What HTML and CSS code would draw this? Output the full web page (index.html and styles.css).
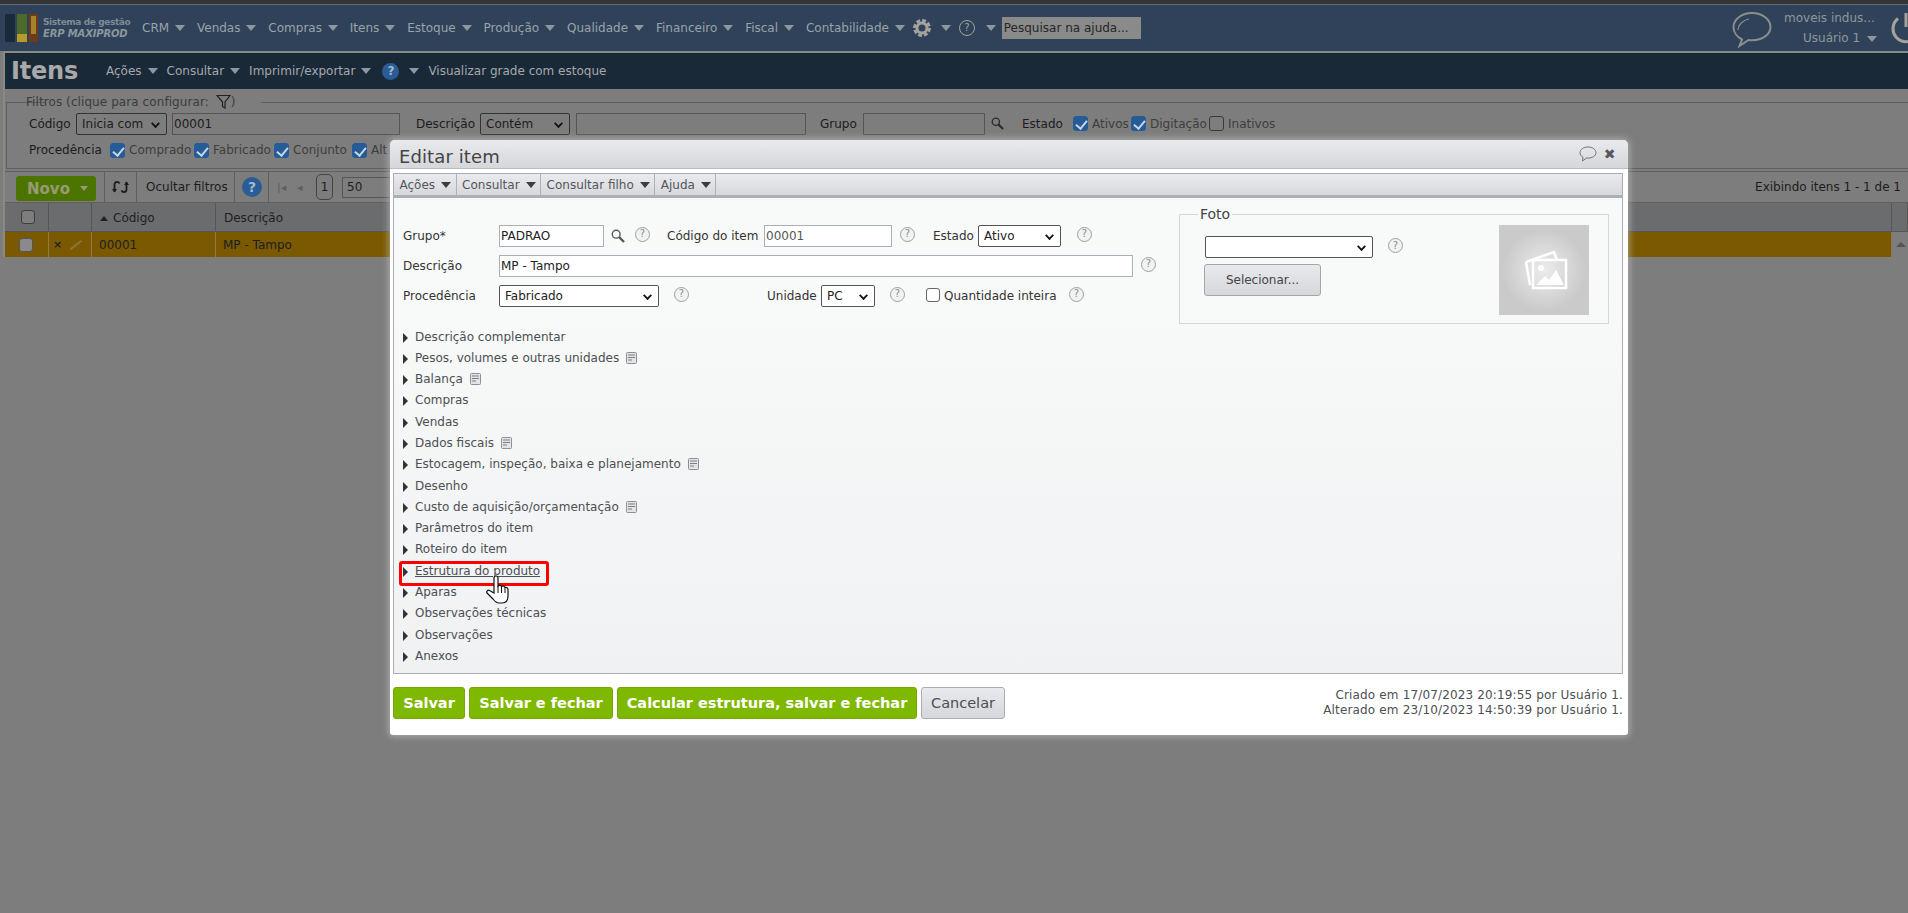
FILE: index.html
```html
<!DOCTYPE html>
<html lang="pt-BR">
<head>
<meta charset="utf-8">
<title>Itens</title>
<link rel="stylesheet" href="styles.css">
</head>
<body>
<svg class="defs" width="0" height="0" aria-hidden="true">
  <symbol id="doc" viewBox="0 0 11 12"><rect x="0.5" y="0.5" width="10" height="11" rx="1" fill="#e3e4e6" stroke="#8d9094"/><path d="M2 3h7M2 5.500h7M2 8h4" stroke="#7b7e83" fill="none"/></symbol>
  <symbol id="lens" viewBox="0 0 14 14"><circle cx="5.200" cy="5.200" r="3.900" fill="none" stroke="currentColor" stroke-width="1.400"/><path d="M8 8l5 5" stroke="currentColor" stroke-width="2.400"/></symbol>
</svg>

<div class="stripe"></div>
<header class="top">
  <svg class="logo" width="34" height="32" viewBox="0 0 34 32"><rect x="0" y="2" width="10" height="28" fill="#1b2a3a"/><rect x="12" y="2" width="10" height="28" fill="#4c6a2a"/><rect x="12" y="22" width="10" height="8" fill="#b59a2c"/><rect x="24" y="2" width="9" height="28" fill="#6d3b1c"/><rect x="26" y="4" width="5" height="18" fill="#a5832b"/></svg>
  <div class="brand"><span class="brand-a">Sistema de gestão</span><span class="brand-b">ERP MAXIPROD</span></div>
  <nav class="nav">
    <a class="nav-i">CRM<i class="caret"></i></a>
    <a class="nav-i">Vendas<i class="caret"></i></a>
    <a class="nav-i">Compras<i class="caret"></i></a>
    <a class="nav-i">Itens<i class="caret"></i></a>
    <a class="nav-i">Estoque<i class="caret"></i></a>
    <a class="nav-i">Produção<i class="caret"></i></a>
    <a class="nav-i">Qualidade<i class="caret"></i></a>
    <a class="nav-i">Financeiro<i class="caret"></i></a>
    <a class="nav-i">Fiscal<i class="caret"></i></a>
    <a class="nav-i">Contabilidade<i class="caret"></i></a>
  </nav>
  <svg class="gear" width="18" height="18" viewBox="0 0 18 18"><circle cx="9" cy="9" r="5" fill="none" stroke="#a3a39c" stroke-width="3"/><circle cx="9" cy="9" r="7.400" fill="none" stroke="#a3a39c" stroke-width="3" stroke-dasharray="3.800 2"/></svg>
  <i class="caret caret-gear"></i>
  <span class="help help-top">?</span>
  <i class="caret caret-help"></i>
  <div class="search">Pesquisar na ajuda...</div>
  <div class="grow"></div>
  <svg class="chat" width="40" height="37" viewBox="0 0 40 37"><path d="M20 2C9.500 2 1.500 8.500 1.500 16c0 6 4.500 10.500 8.500 12.500L7.500 35l9-6c1 .2 2.500.3 3.500.3 10.500 0 18.500-6 18.500-13.300S30.500 2 20 2z" fill="none" stroke="#8b8f8d" stroke-width="2"/><path d="M6 19c0-5 5-10 11-11" fill="none" stroke="#8b8f8d" stroke-width="1.200"/></svg>
  <div class="user"><span class="user-co">moveis indus...</span><span class="user-nm">Usuário 1<i class="caret caret-user"></i></span></div>
  <svg class="power" width="34" height="32" viewBox="0 0 34 32"><path d="M9 6.500A13 13 0 1 0 25 6.500" fill="none" stroke="#a3a39c" stroke-width="3"/><path d="M17 1v14" stroke="#a3a39c" stroke-width="3"/></svg>
</header>

<main class="frame">
  <div class="titlebar">
    <h1 class="title">Itens</h1>
    <a class="tb-i tb-acoes">Ações<i class="caret"></i></a>
    <a class="tb-i">Consultar<i class="caret"></i></a>
    <a class="tb-i">Imprimir/exportar<i class="caret"></i></a>
    <span class="help help-blue">?</span>
    <i class="caret caret-tb"></i>
    <a class="tb-i tb-vis">Visualizar grade com estoque</a>
  </div>

  <fieldset class="filters">
    <legend class="f-legend">Filtros (clique para configurar:
      <svg class="funnel" width="15" height="15" viewBox="0 0 15 15"><path d="M1 1.500h13L9 8v6L6.500 12.500V8z" fill="none" stroke="#222" stroke-width="1.200"/></svg>)</legend>
    <div class="f-row f-row1">
      <span class="f-lab w-cod">Código</span>
      <span class="sel sel-dark w-ini">Inicia com<i class="chev"></i></span>
      <span class="inp inp-dark w-val">00001</span>
      <span class="f-lab w-desc">Descrição</span>
      <span class="sel sel-dark w-cont">Contém<i class="chev"></i></span>
      <span class="inp inp-dark w-descv"></span>
      <span class="f-lab w-gr">Grupo</span>
      <span class="inp inp-dark w-grv"></span>
      <svg class="lens-f" width="13" height="13"><use href="#lens"/></svg>
      <span class="f-lab w-est">Estado</span>
      <span class="ck on"></span><span class="ck-t t-at">Ativos</span>
      <span class="ck on"></span><span class="ck-t t-di">Digitação</span>
      <span class="ck"></span><span class="ck-t">Inativos</span>
    </div>
    <div class="f-row f-row2">
      <span class="f-lab w-proc">Procedência</span>
      <span class="ck on"></span><span class="ck-t t-co">Comprado</span>
      <span class="ck on"></span><span class="ck-t t-fa">Fabricado</span>
      <span class="ck on"></span><span class="ck-t t-cj">Conjunto</span>
      <span class="ck on"></span><span class="ck-t">Alt</span>
    </div>
  </fieldset>

  <div class="toolbar">
    <span class="novo">Novo<i class="caret caret-novo"></i></span>
    <span class="tsep tsep-a"></span>
    <span class="refresh"><svg width="17" height="16" viewBox="0 0 17 16"><path d="M7.500 4.500C6.500 2.500 3 2 2.500 5.500V13" fill="none" stroke="#1c1c1c" stroke-width="1.800"/><path d="M9.500 11.500C10.500 13.500 14 14 14.500 10.500V3" fill="none" stroke="#1c1c1c" stroke-width="1.800"/><path d="M0 10l2.500 3.500L5 10zM12 6l2.500-3.500L17 6z" fill="#1c1c1c"/></svg></span>
    <span class="tsep"></span>
    <span class="t-text">Ocultar filtros</span>
    <span class="tsep"></span>
    <span class="help help-blue help-big">?</span>
    <span class="tsep"></span>
    <span class="pg">|◂</span><span class="pg">◂</span>
    <span class="pg-box">1</span>
    <span class="pg-sel">50</span>
    <span class="grow"></span>
    <span class="t-count">Exibindo itens 1 - 1 de 1</span>
  </div>

  <div class="grid g-head">
    <div class="gc"><span class="g-ck"></span></div>
    <div class="gc"></div>
    <div class="gc g-text"><i class="up"></i>Código</div>
    <div class="gc g-text">Descrição</div>
    <div class="gc"></div>
  </div>
  <div class="grid g-row">
    <div class="gc"><span class="g-ck"></span></div>
    <div class="gc g-ic"><span class="g-x">×</span><span class="g-pen"></span></div>
    <div class="gc g-text">00001</div>
    <div class="gc g-text">MP - Tampo</div>
    <div class="gc g-scroll"></div>
  </div>
</main>
<i class="scroll-up"></i>

<section class="modal">
  <div class="m-title">
    <h2 class="m-h">Editar item</h2>
    <svg class="m-chat" width="18" height="16" viewBox="0 0 18 16"><path d="M9 1C4.500 1 1 3.500 1 6.700c0 2 1.300 3.500 3 4.500L3.500 15l4-3c.5.100 1 .1 1.500.1 4.500 0 8-2.300 8-5.400S13.500 1 9 1z" fill="none" stroke="#6e7073"/></svg>
    <span class="m-x">✖</span>
  </div>
  <div class="m-panel">
    <div class="m-tools">
      <a class="m-t">Ações<i class="caret caret-m"></i></a>
      <a class="m-t">Consultar<i class="caret caret-m"></i></a>
      <a class="m-t">Consultar filho<i class="caret caret-m"></i></a>
      <a class="m-t">Ajuda<i class="caret caret-m"></i></a>
    </div>
    <div class="m-body">
      <div class="m-left">
        <div class="m-row">
          <label class="m-lab">Grupo*</label>
          <span class="inp w-105">PADRAO</span>
          <svg class="lens-m" width="14" height="14"><use href="#lens"/></svg>
          <span class="help h-grupo">?</span>
          <label class="m-lab2 l-cod">Código do item</label>
          <span class="inp inp-gray w-127">00001</span>
          <span class="help h-cod">?</span>
          <label class="m-lab2 l-est">Estado</label>
          <span class="sel w-82">Ativo<i class="chev"></i></span>
          <span class="help h-est">?</span>
        </div>
        <div class="m-row">
          <label class="m-lab">Descrição</label>
          <span class="inp w-634">MP - Tampo</span>
          <span class="help h-desc">?</span>
        </div>
        <div class="m-row">
          <label class="m-lab">Procedência</label>
          <span class="sel w-160">Fabricado<i class="chev"></i></span>
          <span class="help h-proc">?</span>
          <label class="m-lab2 l-uni">Unidade</label>
          <span class="sel w-54">PC<i class="chev"></i></span>
          <span class="help h-uni">?</span>
          <span class="ck ck-light"></span>
          <label class="m-lab2 l-qtd">Quantidade inteira</label>
          <span class="help h-qtd">?</span>
        </div>
        <ul class="acc">
          <li class="acc-i">Descrição complementar</li>
          <li class="acc-i">Pesos, volumes e outras unidades<svg class="doc" width="11" height="12"><use href="#doc"/></svg></li>
          <li class="acc-i">Balança<svg class="doc" width="11" height="12"><use href="#doc"/></svg></li>
          <li class="acc-i">Compras</li>
          <li class="acc-i">Vendas</li>
          <li class="acc-i">Dados fiscais<svg class="doc" width="11" height="12"><use href="#doc"/></svg></li>
          <li class="acc-i">Estocagem, inspeção, baixa e planejamento<svg class="doc" width="11" height="12"><use href="#doc"/></svg></li>
          <li class="acc-i">Desenho</li>
          <li class="acc-i">Custo de aquisição/orçamentação<svg class="doc" width="11" height="12"><use href="#doc"/></svg></li>
          <li class="acc-i">Parâmetros do item</li>
          <li class="acc-i">Roteiro do item</li>
          <li class="acc-i acc-u">Estrutura do produto</li>
          <li class="acc-i">Aparas</li>
          <li class="acc-i">Observações técnicas</li>
          <li class="acc-i">Observações</li>
          <li class="acc-i">Anexos</li>
        </ul>
      </div>
      <fieldset class="foto">
        <legend class="foto-l">Foto</legend>
        <div class="foto-c">
          <div class="foto-row"><span class="sel w-168"><i class="chev"></i></span><span class="help h-foto">?</span></div>
          <span class="btn-sel">Selecionar...</span>
        </div>
        <div class="foto-img">
          <svg width="48" height="42" viewBox="0 0 48 42"><path d="M6 13L34 3l3 8" fill="none" stroke="#fff" stroke-width="2.500"/><path d="M6 13l4 23" fill="none" stroke="#fff" stroke-width="2.500"/><rect x="13" y="11" width="33" height="28" fill="none" stroke="#fff" stroke-width="2.500"/><circle cx="21" cy="19" r="3" fill="#fff"/><path d="M16 36l9-9 4 4 7-10 8 15z" fill="#fff"/></svg>
        </div>
      </fieldset>
    </div>
  </div>
  <div class="m-foot">
    <button class="btn btn-go b-s">Salvar</button>
    <button class="btn btn-go b-f">Salvar e fechar</button>
    <button class="btn btn-go b-c">Calcular estrutura, salvar e fechar</button>
    <button class="btn btn-no">Cancelar</button>
    <div class="grow"></div>
    <div class="audit">Criado em 17/07/2023 20:19:55 por Usuário 1.<br>Alterado em 23/10/2023 14:50:39 por Usuário 1.</div>
  </div>
  <div class="redbox"></div>
  <svg class="hand" width="24" height="30" viewBox="0 0 24 30"><path d="M10 1c1.500 0 2 1 2 2v8c1-1 3-1 3.500 .5 1.500-1 3-.5 3.500 1 1.500-.5 3 .5 3 2V21c0 4-2 7-6 7h-3c-3 0-4.500-2-6-4l-6-6c-1-1.500 1-3.500 2.500-2.500L8 18V3c0-1 .5-2 2-2z" fill="#fff" stroke="#111" stroke-width="1.200"/><path d="M12 11v7M15.500 12v6M19 13v5" stroke="#111" fill="none"/></svg>
</section>
</body>
</html>
```
FILE: styles.css
```css
* { box-sizing: border-box; }
html, body { margin: 0; padding: 0; height: 100%; }
body { width: 1908px; height: 913px; overflow: hidden; background: #7d7d7d; position: relative; font: 12px "DejaVu Sans", sans-serif; color: #222; }
.defs { position: absolute; }
.grow { flex: 1; }
a { color: inherit; }
h1, h2, ul { margin: 0; padding: 0; }
i { font-style: normal; }

.stripe { height: 4px; background: #353535; }
.top { height: 47px; background: #2f4259; border-top: 1px solid #5d6b7a; display: flex; align-items: center; color: #9aa2aa; overflow: hidden; padding-left: 5px; }
.logo { flex: none; }
.brand { margin-left: 4px; width: 99px; display: flex; flex-direction: column; line-height: 12px; }
.brand-a { font-size: 9px; font-weight: bold; color: #7e8a96; letter-spacing: -.4px; white-space: nowrap; }
.brand-b { font-size: 10px; font-weight: bold; color: #8c969f; font-style: italic; white-space: nowrap; letter-spacing: -.15px; }
.nav { display: flex; white-space: nowrap; }
.nav-i { display: flex; align-items: center; margin-right: 11.9px; }
.caret { display: inline-block; width: 0; height: 0; border: 5px solid transparent; border-top: 6px solid #8f979e; border-bottom: 0; margin-left: 6px; }
.gear { margin-left: -4px; flex: none; }
.caret-gear { margin-left: 10px; }
.help { display: inline-flex; align-items: center; justify-content: center; flex: none; width: 15px; height: 15px; border-radius: 50%; border: 1.500px solid #9da0a3; color: #8b8e91; font-size: 10px; line-height: 1; background: #f2f2f2; }
.help-top { margin-left: 8px; width: 16px; height: 16px; background: transparent; border-color: #a3a39c; color: #a3a39c; }
.caret-help { margin-left: 11px; }
.search { margin-left: 6px; width: 139px; height: 22px; background: #8a8a8a; color: #262626; line-height: 22px; padding-left: 2px; white-space: nowrap; overflow: hidden; }
.chat { flex: none; margin-top: 2px; }
.user { width: 108px; margin-left: 12px; display: flex; flex-direction: column; align-items: flex-start; line-height: 20px; white-space: nowrap; color: #8f979e; flex: none; }
.user-nm { margin-left: 19px; }
.caret-user { margin-left: 7px; }
.power { flex: none; margin-right: -15px; margin-left: -3px; }

.frame { margin-left: 3px; border-left: 2px solid #8a8a84; border-top: 2px solid #8a8a84; }
.titlebar { height: 36px; background: #1a2938; display: flex; align-items: center; color: #a5a8aa; white-space: nowrap; padding-left: 6px; }
.title { font-size: 24px; width: 95px; color: #a9a9a9; font-weight: bold; letter-spacing: -.2px; }
.tb-i { margin-right: 9px; display: flex; align-items: center; }
.help-blue { background: #2c5c94; border: 0; color: #9dbad8; font-weight: bold; font-size: 12px; width: 17px; height: 17px; margin-left: 2px; }
.caret-tb { margin-left: 10px; }
.tb-vis { margin-left: 9px; }

.filters { margin: 5px 0 0 1px; padding: 0 0 0 22px; height: 75px; border: 1px solid #5f5f5f; border-width: 1px 0 1px 1px; min-width: 0; }
.f-legend { margin-left: 17px; margin-right: 0; padding: 0 3px 0 2px; height: 16px; line-height: 17px; color: #3c3c3c; position: relative; left: -22px; white-space: nowrap; letter-spacing: .08px; }
.funnel { vertical-align: -3px; margin-left: 3px; }
.f-row { display: flex; align-items: center; white-space: nowrap; }
.f-row1 { height: 23px; margin-top: 2px; }
.f-row2 { height: 20px; margin-top: 5px; }
.f-lab { color: #1c1c1c; }
.w-cod { width: 47px; }
.sel { display: flex; align-items: center; height: 22px; background: #fff; border: 1px solid #555; border-radius: 2px; padding-left: 5px; color: #222; position: relative; flex: none; }
.sel-dark { background: #7d7d7d; border-color: #333; color: #1c1c1c; }
.chev { position: absolute; right: 7px; top: 7px; width: 7px; height: 7px; border: solid #111; border-width: 0 2px 2px 0; transform: rotate(45deg) scale(.9); margin-top: -1px; }
.inp { display: flex; align-items: center; height: 22px; background: #fff; border: 1px solid #aab0b6; padding-left: 1px; color: #222; flex: none; }
.inp-dark { background: #7d7d7d; border-color: #555; color: #1c1c1c; }
.w-ini { width: 91px; }
.w-val { width: 228px; margin-left: 5px; }
.w-desc { margin-left: 16px; width: 64px; }
.w-cont { width: 90px; }
.w-descv { width: 230px; margin-left: 6px; }
.w-gr { margin-left: 14px; width: 43px; }
.w-grv { width: 122px; }
.lens-f { color: #2c2c2c; margin-left: 6px; flex: none; }
.w-est { margin-left: 18px; width: 51px; }
.ck { width: 15px; height: 15px; border: 1px solid #3a3a3a; border-radius: 3px; flex: none; position: relative; background: transparent; }
.ck.on { background: #255b97; border-color: #255b97; }
.ck.on::after { content: ""; position: absolute; left: 4px; top: 1px; width: 5px; height: 9px; border: solid #c9d6e4; border-width: 0 2px 2px 0; transform: rotate(40deg); }
.ck-t { margin-left: 4px; color: #3d3d3d; }
.t-at { width: 39px; }
.t-di { width: 59px; }
.t-co { width: 65px; }
.t-fa { width: 61px; }
.t-cj { width: 59px; }
.w-proc { width: 81px; }

.toolbar { height: 32px; margin-top: 2px; display: flex; align-items: center; border-top: 1px solid #5f5f5f; border-bottom: 1px solid #5f5f5f; white-space: nowrap; padding-left: 11px; padding-right: 7px; }
.novo { width: 80px; height: 25px; margin-top: 3px; background: #4b7500; border-radius: 3px; display: flex; align-items: center; justify-content: space-between; padding: 0 8px 0 11px; color: #9a9a72; font-weight: bold; font-size: 15px; }
.caret-novo { border-top-color: #9a9a72; border-width: 4px; border-top-width: 5px; border-bottom: 0; }
.tsep { width: 1px; height: 30px; background: #5f5f5f; flex: none; }
.tsep-a { margin-left: 8px; }
.refresh { width: 31px; display: flex; justify-content: center; }
.t-text { color: #1c1c1c; width: 97px; padding-left: 9px; }
.help-big { width: 20px; height: 20px; margin: 0 6px 0 7px; font-size: 14px; }
.pg { color: #5e5e5e; font-size: 11px; width: 20px; padding-left: 8px; }
.pg-box { width: 17px; height: 26px; border: 1px solid #444; border-radius: 5px; text-align: center; line-height: 24px; margin: 0 9px 0 7px; color: #1c1c1c; flex: none; }
.pg-sel { width: 60px; height: 21px; border: 1px solid #555; padding-left: 4px; line-height: 19px; color: #1c1c1c; flex: none; }
.t-count { color: #1c1c1c; }

.grid { display: grid; grid-template-columns: 43px 43px 124px 1fr 16px; }
.gc { border-right: 1px solid #575757; display: flex; align-items: center; }
.g-head { height: 29px; background: #6b6c6e; border-bottom: 1px solid #555; padding-left: 1px; }
.g-head .g-text { padding-top: 2px; }
.g-row { height: 25px; background: #7a5900; padding-left: 1px; }
.g-row .gc { border-right-color: #93794a; }
.g-row .g-scroll { background: #7d7d7d; border: 0; }
.g-ck { width: 14px; height: 14px; margin-left: 15px; border: 1px solid #3e3e3e; border-radius: 3px; background: #7d7d7d; }
.g-row .g-ck { margin-left: 13px; background: #8a8a8a; border-color: #555; }
.g-text { padding-left: 8px; color: #202020; }
.g-row .g-text { padding-left: 7px; }
.up { width: 0; height: 0; border: 4px solid transparent; border-bottom: 5px solid #222; border-top: 0; margin-right: 5px; }
.g-ic { padding-left: 4px; color: #222; gap: 7px; font-size: 11px; }
.g-x { font-weight: bold; }
.g-pen { width: 14px; height: 2px; background: #8a7840; transform: rotate(-38deg); }
.scroll-up { position: absolute; left: 1896px; top: 242px; width: 0; height: 0; border: 5px solid transparent; border-bottom: 5px solid #555; border-top: 0; }

.modal { position: absolute; left: 390px; top: 140px; width: 1238px; height: 595px; background: #fff; border-radius: 5px 5px 3px 3px; box-shadow: 0 0 6px 2px rgba(200,200,200,.55); }
.m-title { height: 29px; background: linear-gradient(#e9eaee, #d6d7db); border-radius: 5px 5px 0 0; display: flex; align-items: center; padding-left: 9px; border-bottom: 1px solid #b8bbc0; }
.m-h { font-size: 18px; font-weight: normal; color: #444; flex: 1; padding-top: 4px; letter-spacing: .1px; }
.m-chat { flex: none; }
.m-x { width: 13px; margin: 0 12px 0 6px; color: #55585c; font-size: 14px; text-align: center; }
.m-panel { margin: 4px 0 0 3px; width: 1230px; height: 501px; border: 1px solid #a9adb3; }
.m-tools { height: 24px; background: linear-gradient(#eaebef, #d7d8dc); border-bottom: 3px solid #abb0b7; display: flex; }
.m-t { display: flex; align-items: center; padding: 0 4.5px 0 5.5px; border-right: 1px solid #aeb1b6; color: #54575b; white-space: nowrap; }
.caret-m { border-top-color: #3a3d41; border-width: 5px; border-top-width: 6px; border-bottom: 0; margin-left: 6px; }
.m-body { height: 475px; display: flex; background: linear-gradient(#f8faf9 20%, #f0f1f3 100%); }
.m-left { width: 785px; padding: 27px 0 0 9px; flex: none; }
.m-row { display: flex; align-items: center; height: 22px; margin-bottom: 8px; white-space: nowrap; color: #333; }
.m-lab { width: 96px; color: #333; }
.w-105 { width: 105px; }
.w-127 { width: 128px; }
.inp-gray { color: #555; }
.w-82 { width: 83px; }
.w-634 { width: 634px; }
.w-160 { width: 160px; }
.w-54 { width: 54px; }
.w-168 { width: 168px; }
.lens-m { margin-left: 7px; color: #55585c; flex: none; }
.h-grupo { margin: -4px 0 0 10px; }
.l-cod { margin-left: 17px; width: 97px; }
.h-cod { margin: -4px 0 0 8px; }
.l-est { margin-left: 18px; width: 45px; }
.h-est { margin: -4px 0 0 16px; }
.h-desc { margin: -4px 0 0 8px; }
.h-proc { margin: -4px 0 0 15px; }
.l-uni { margin-left: 78px; width: 54px; }
.h-uni { margin: -4px 0 0 15px; }
.ck-light { margin-left: 21px; width: 14px; height: 14px; border-color: #666; background: #fff; margin-top: -3px; }
.l-qtd { margin-left: 4px; width: 115px; }
.h-qtd { margin: -4px 0 0 10px; }
.acc { list-style: none; margin-top: 19.5px; }
.acc-i { height: 21.3px; line-height: 21.3px; padding-left: 12px; color: #4c4f53; position: relative; white-space: nowrap; }
.acc-i::before { content: ""; position: absolute; left: 0; top: 6px; width: 0; height: 0; border: 5px solid transparent; border-left: 5px solid #333; border-right: 0; }
.acc-u { text-decoration: underline; }
.doc { margin-left: 7px; vertical-align: -2px; }

.foto { flex: none; margin: 8px 0 0; width: 430px; height: 118px; padding: 0; border: 1px solid #d5d8db; display: flex; position: relative; min-width: 0; }
.foto-l { margin-left: 18px; padding: 0 2px; font-size: 14px; line-height: 16px; color: #444; }
.foto-c { width: 319px; padding: 14px 0 0 25px; flex: none; }
.foto-row { display: flex; align-items: center; }
.h-foto { margin: -3px 0 0 15px; }
.btn-sel { display: block; width: 117px; height: 32px; margin-top: 6px; margin-left: -1px; border: 1px solid #a4a6aa; border-radius: 3px; background: linear-gradient(#e9eaee, #d6d7db); text-align: center; line-height: 30px; color: #444; }
.foto-img { width: 90px; height: 90px; margin-top: 3px; background: radial-gradient(circle, #ececee 0, #cacaca 65%); display: flex; align-items: center; justify-content: center; flex: none; }

.m-foot { display: flex; align-items: center; margin: 13px 0 0 3px; width: 1230px; height: 32px; gap: 4px; }
.btn { height: 32px; border-radius: 3px; font: 14.5px "DejaVu Sans", sans-serif; padding: 0; white-space: nowrap; }
.btn-go { background: #7fb800; border: 1px solid #74a800; color: #fff; font-weight: bold; }
.b-s { width: 72px; }
.b-f { width: 144px; }
.b-c { width: 300px; }
.btn-no { width: 84px; background: linear-gradient(#e9eaee, #d6d7db); border: 1px solid #a9adb3; color: #4b4e52; }
.audit { text-align: right; font-size: 12px; letter-spacing: .15px; line-height: 15.500px; color: #4c4f53; white-space: nowrap; }

.redbox { position: absolute; left: 9px; top: 421px; width: 150px; height: 25px; border: 3px solid #f00; border-radius: 3px; }
.hand { position: absolute; left: 96px; top: 435px; }
```
